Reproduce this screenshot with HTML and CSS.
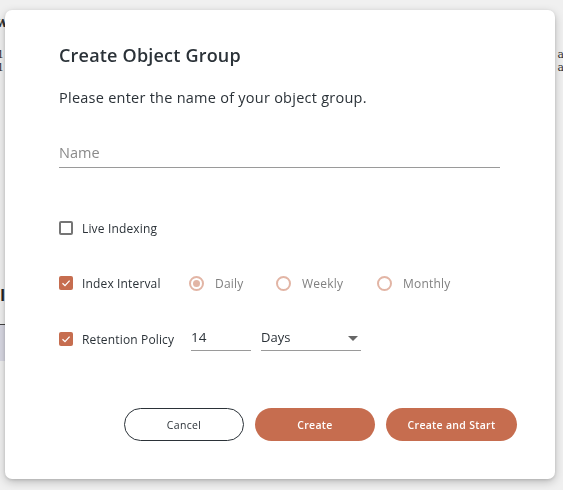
FILE: index.html
```html
<!DOCTYPE html>
<html>
<head>
<meta charset="utf-8">
<link rel="stylesheet" href="styles.css">
</head>
<body>
<div class="page">
  <div class="page-head">Overview</div>
  <div class="page-rows">
    <div class="row"><span>21</span><span>a</span></div>
    <div class="row"><span>21</span><span>a</span></div>
  </div>
  <div class="page-section">
    <div class="section-title">I</div>
    <div class="section-band"></div>
  </div>
</div>
<div class="overlay"></div>
<div class="dialog">
  <h1 class="title">Create Object Group</h1>
  <p class="subtitle">Please enter the name of your object group.</p>
  <div class="field name-field">
    <span class="placeholder">Name</span>
  </div>

  <div class="option live">
    <span class="check"></span>
    <span class="opt-label">Live Indexing</span>
  </div>

  <div class="option interval">
    <span class="check on"><svg viewBox="0 0 14 14" width="14" height="14"><path d="M3.5 7.2 L6 9.6 L10.6 4.6" fill="none" stroke="#fff" stroke-width="1.3"/></svg></span>
    <span class="opt-label w-interval">Index Interval</span>
    <div class="radios">
      <span class="radio-item r-daily"><span class="radio sel"></span><span class="radio-label">Daily</span></span>
      <span class="radio-item r-weekly"><span class="radio"></span><span class="radio-label">Weekly</span></span>
      <span class="radio-item"><span class="radio"></span><span class="radio-label">Monthly</span></span>
    </div>
  </div>

  <div class="option retention">
    <span class="check on"><svg viewBox="0 0 14 14" width="14" height="14"><path d="M3.5 7.2 L6 9.6 L10.6 4.6" fill="none" stroke="#fff" stroke-width="1.3"/></svg></span>
    <span class="opt-label w-retention">Retention Policy</span>
    <div class="small-input"><span>14</span></div>
    <div class="select"><span>Days</span><span class="caret"></span></div>
  </div>

  <div class="actions">
    <button class="btn outline">Cancel</button>
    <button class="btn fill b-create">Create</button>
    <button class="btn fill b-start">Create and Start</button>
  </div>
</div>
</body>
</html>
```

FILE: styles.css
```css
html, body {
  margin: 0;
  padding: 0;
  width: 563px;
  height: 490px;
  overflow: hidden;
  background: #ffffff;
  font-family: "Open Sans", "Noto Sans", sans-serif;
}

.page {
  padding: 14px 0 0 0;
  font-family: "DejaVu Serif", serif;
  color: #333;
}
.page-head {
  font-weight: bold;
  font-size: 14px;
  margin-left: -63px;
}
.page-rows {
  margin-top: 18px;
  font-size: 11px;
  line-height: 13px;
}
.row {
  display: flex;
  justify-content: space-between;
  margin-left: -10px;
  margin-right: -1px;
}
.page-section {
  margin-top: 210px;
}
.section-title {
  font-family: "Open Sans", sans-serif;
  font-weight: bold;
  font-size: 16px;
  color: #222;
  height: 22px;
}
.section-band {
  margin-top: 12px;
  height: 37px;
  width: 40px;
  background: #e6e6f2;
}
.section-band::after {
  content: "";
  display: block;
  height: 1px;
  margin-top: 18px;
  background: #444;
}

.overlay {
  position: fixed;
  inset: 0;
  background: rgba(60, 60, 60, 0.08);
}

.dialog {
  position: fixed;
  left: 5px;
  top: 10px;
  width: 550px;
  height: 469px;
  box-sizing: border-box;
  padding: 33px 55px 0 54px;
  background: #fff;
  border-radius: 7px;
  box-shadow: 0 3px 10px rgba(0, 0, 0, 0.22), 0 1px 3px rgba(0,0,0,0.12);
  color: #2b3238;
}

.title {
  margin: 0;
  font-size: 18px;
  line-height: 24px;
  font-weight: 600;
  letter-spacing: 0.2px;
  color: #2b3238;
}
.subtitle {
  margin: 21px 0 0 0;
  font-size: 14.5px;
  line-height: 20px;
  color: #2b3238;
  letter-spacing: 0.25px;
}

.field {
  border-bottom: 1px solid #9a9a9a;
}
.name-field {
  margin-top: 34px;
  height: 25px;
  display: flex;
  align-items: flex-start;
}
.placeholder {
  font-size: 14.5px;
  line-height: 20px;
  color: #8a8a8a;
  margin-top: 1px;
}

.option {
  display: flex;
  align-items: center;
  height: 20px;
}
.live { margin-top: 50px; }
.interval { margin-top: 35px; }
.retention { margin-top: 36px; }

.check {
  width: 14px;
  height: 14px;
  box-sizing: border-box;
  border: 2px solid #757575;
  border-radius: 2px;
  flex: none;
  display: flex;
}
.check.on {
  border: none;
  background: #c66d4f;
}
.opt-label {
  margin-left: 9px;
  font-size: 12px;
  letter-spacing: 0.15px;
  color: #2b3238;
}
.w-interval { width: 107px; flex: none; }
.w-retention { width: 109px; flex: none; }

.radios {
  display: flex;
  align-items: center;
}
.radio-item {
  display: flex;
  align-items: center;
  width: 100px;
}
.r-daily { width: 87px; }
.r-weekly { width: 101px; }
.radio {
  width: 15px;
  height: 15px;
  box-sizing: border-box;
  border: 2px solid #e2b5a5;
  border-radius: 50%;
  flex: none;
  display: flex;
  align-items: center;
  justify-content: center;
}
.radio.sel::after {
  content: "";
  width: 7px;
  height: 7px;
  border-radius: 50%;
  background: #e2b5a5;
}
.radio-label {
  margin-left: 11px;
  font-size: 12px;
  letter-spacing: 0.2px;
  color: #808080;
}

.small-input {
  width: 60px;
  height: 21px;
  border-bottom: 1px solid #9a9a9a;
  font-size: 13.5px;
  display: flex;
  align-items: flex-start;
  margin-top: 1px;
  flex: none;
}
.select {
  margin-left: 10px;
  width: 100px;
  height: 21px;
  border-bottom: 1px solid #9a9a9a;
  font-size: 13px;
  display: flex;
  align-items: flex-start;
  justify-content: space-between;
  margin-top: 1px;
  color: #2b3238;
  flex: none;
}
.small-input span, .select span:first-child { margin-top: -1px; }
.caret {
  width: 0;
  height: 0;
  border-left: 5px solid transparent;
  border-right: 5px solid transparent;
  border-top: 5px solid #666;
  margin-right: 3px;
  margin-top: 7px;
}

.actions {
  margin-top: 59px;
  display: flex;
  justify-content: flex-end;
  gap: 11px;
  margin-right: -17px;
}
.btn {
  height: 33px;
  border-radius: 17px;
  font-family: "Open Sans", sans-serif;
  font-size: 10.5px;
  letter-spacing: 0.3px;
  cursor: pointer;
  box-sizing: border-box;
}
.btn.outline {
  width: 120px;
  background: #fff;
  border: 1px solid #2b3238;
  color: #2b3238;
}
.btn.fill {
  background: #c66d4f;
  border: none;
  color: #fff;
  font-weight: 600;
}
.b-create { width: 120px; }
.b-start { width: 131px; }
```
